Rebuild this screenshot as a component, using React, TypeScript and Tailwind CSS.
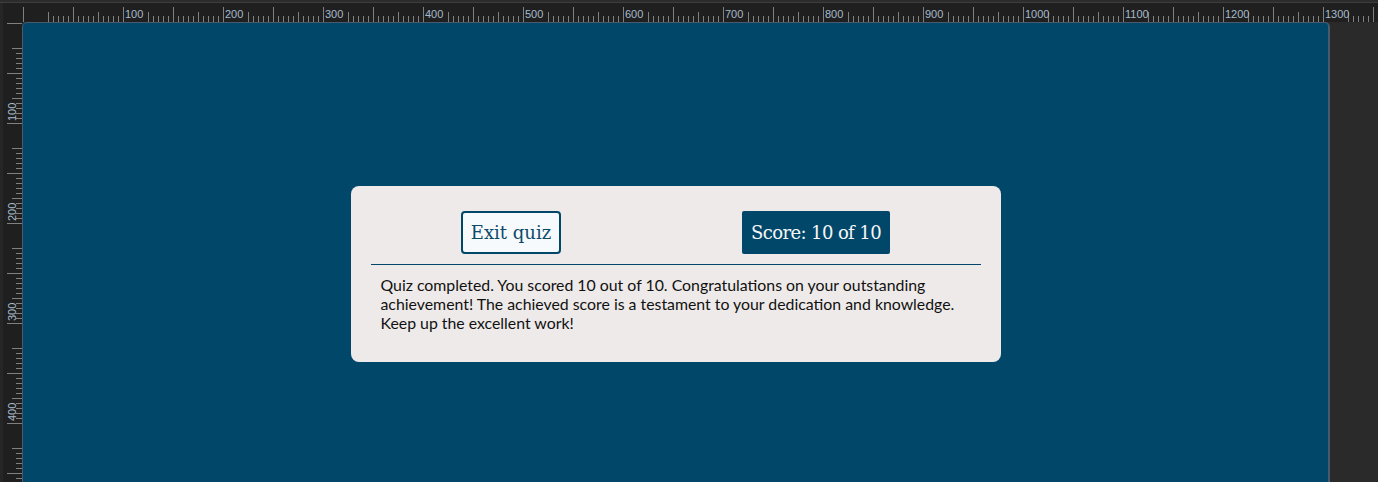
import React from 'react';

const TICK = '#808080';
const LABEL = '#a8bacb';

// ticks every 5 units, medium every 25, tall every 50, labels every 100
const tickLen = (u: number) => (u % 50 === 0 ? 15 : u % 25 === 0 ? 10 : 6);
const hiddenByLabel = (u: number) => u > 0 && u % 100 > 0 && u % 100 <= 20;

const HRuler: React.FC = () => {
  const ticks: number[] = [];
  for (let u = 0; u <= 1355; u += 5) ticks.push(u);
  return (
    <svg width={1356} height={19} className="block bg-[#1f1f1f]">
      {ticks.map((u) =>
        hiddenByLabel(u) ? null : (
          <line key={u} x1={1.5 + u} x2={1.5 + u} y1={19 - tickLen(u)} y2={19} stroke={TICK} strokeWidth={1} />
        )
      )}
      {ticks
        .filter((u) => u > 0 && u % 100 === 0)
        .map((u) => (
          <text key={`l${u}`} x={u + 3} y={15} fill={LABEL} fontSize={11} fontFamily="Liberation Sans, sans-serif">
            {u}
          </text>
        ))}
    </svg>
  );
};

const VRuler: React.FC = () => {
  const ticks: number[] = [];
  for (let u = 0; u <= 460; u += 5) ticks.push(u);
  return (
    <svg width={22} height={460} className="block shrink-0 bg-[#1f1f1f]">
      <rect x={0} y={0} width={3} height={460} fill="#262626" />
      {ticks.map((u) =>
        hiddenByLabel(u) ? null : (
          <line key={u} y1={1.5 + u} y2={1.5 + u} x1={22 - tickLen(u)} x2={22} stroke={TICK} strokeWidth={1} />
        )
      )}
      {ticks
        .filter((u) => u > 0 && u % 100 === 0)
        .map((u) => (
          <text
            key={`l${u}`}
            x={16}
            y={u - 1}
            transform={`rotate(-90 16 ${u - 1})`}
            fill={LABEL}
            fontSize={11}
            fontFamily="Liberation Sans, sans-serif"
          >
            {u}
          </text>
        ))}
    </svg>
  );
};

export default function App() {
  return (
    <div className="w-[1378px] h-[482px] overflow-hidden bg-[#2a2a2a] flex flex-col">
      <div className="h-[3px] shrink-0 bg-[#2c2c2c] border-b border-[#3e3e3e]" />
      <div className="flex h-[19px] shrink-0">
        <div className="w-[22px] bg-[#1f1f1f]">
          <div className="w-[3px] h-full bg-[#262626]" />
        </div>
        <HRuler />
      </div>
      <div className="flex flex-1 min-h-0">
        <VRuler />
        <div className="w-[1308px] h-[500px] shrink-0 bg-[#00476a] border-l border-t border-r-2 border-[#485a6e] rounded-t-[5px] flex justify-center pt-[163px]">
          <div className="w-[650px] h-[176px] bg-[#eeeae9] rounded-[8px] px-[20px] pt-[25px]">
            <div className="flex justify-around items-center">
              <button className="w-[100px] h-[43px] flex items-center justify-center border-2 border-[#00476a] rounded-[4px] bg-[#f7fafc] text-[#0c4a6a] text-[18px] font-['DejaVu_Serif',serif]">
                Exit quiz
              </button>
              <div className="w-[148px] h-[43px] flex items-center justify-center rounded-[2px] bg-[#00476a] text-[#f6f6f6] text-[18px] font-['DejaVu_Serif',serif] tracking-[-0.6px]">
                Score: 10 of 10
              </div>
            </div>
            <div className="mt-[10px] h-px bg-[#00476a]" />
            <p className="mt-[10px] px-[10px] text-[15.85px] leading-[19.2px] text-[#111111] font-['Lato',sans-serif]">
              Quiz completed. You scored 10 out of 10. Congratulations on your outstanding achievement! The achieved
              score is a testament to your dedication and knowledge. Keep up the excellent work!
            </p>
          </div>
        </div>
      </div>
    </div>
  );
}
